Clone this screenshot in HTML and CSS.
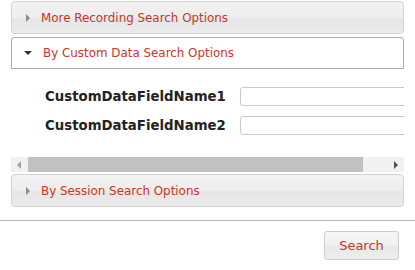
FILE: index.html
```html
<!DOCTYPE html>
<html>
<head>
<meta charset="utf-8">
<link rel="stylesheet" href="styles.css">
</head>
<body>
<div class="panel">
  <div class="acc-header collapsed">
    <span class="tri tri-right"></span>
    <span class="acc-title">More Recording Search Options</span>
  </div>
  <div class="acc-header active">
    <span class="tri tri-down"></span>
    <span class="acc-title">By Custom Data Search Options</span>
  </div>
  <div class="acc-content">
    <div class="scroll-view">
      <div class="fields">
        <div class="field-row">
          <label class="field-label">CustomDataFieldName1</label>
          <input class="field-input" type="text">
        </div>
        <div class="field-row">
          <label class="field-label">CustomDataFieldName2</label>
          <input class="field-input" type="text">
        </div>
      </div>
    </div>
    <div class="hscroll">
      <div class="sb-btn"><span class="sb-arrow sb-left"></span></div>
      <div class="sb-track"><div class="sb-thumb"></div></div>
      <div class="sb-btn"><span class="sb-arrow sb-right"></span></div>
    </div>
  </div>
  <div class="acc-header collapsed">
    <span class="tri tri-right"></span>
    <span class="acc-title">By Session Search Options</span>
  </div>
</div>
<div class="footer">
  <button class="search-btn" type="button">Search</button>
</div>
</body>
</html>
```

FILE: styles.css
```css
html, body {
  margin: 0;
  padding: 0;
  background: #ffffff;
}
body {
  font-family: "DejaVu Sans", Verdana, sans-serif;
  font-size: 12px;
  width: 415px;
  height: 270px;
  overflow: hidden;
}
.panel {
  padding: 1px 11px 0 11px;
  display: flex;
  flex-direction: column;
}
.acc-header {
  box-sizing: border-box;
  height: 33px;
  display: flex;
  align-items: center;
  padding-left: 12px;
  border: 1px solid #d3d3d3;
  border-radius: 4px;
  color: #c8352b;
}
.acc-header.collapsed {
  background: linear-gradient(to bottom, #f2f2f2 0%, #ededed 50%, #e6e6e6 51%, #ebebeb 100%);
}
.acc-header.active {
  margin-top: 3px;
  height: 32px;
  background: #ffffff;
  border: 1px solid #aaaaaa;
  border-radius: 3px 3px 0 0;
}
.acc-title {
  margin-left: 11px;
  font-size: 11.9px;
}
.tri {
  width: 0;
  height: 0;
  display: inline-block;
}
.tri-right {
  border-top: 4px solid transparent;
  border-bottom: 4px solid transparent;
  border-left: 4px solid #8a8a8a;
  margin-left: 2px;
}
.tri-down {
  border-left: 4px solid transparent;
  border-right: 4px solid transparent;
  border-top: 4px solid #333333;
}
.acc-content {
  display: flex;
  flex-direction: column;
  padding-bottom: 2px;
}
.scroll-view {
  overflow: hidden;
  height: 87px;
}
.fields {
  padding: 18px 0 0 34px;
  display: flex;
  flex-direction: column;
  gap: 10px;
  width: 600px;
}
.field-row {
  display: flex;
  align-items: center;
  height: 19px;
}
.field-label {
  width: 195px;
  font-weight: bold;
  font-size: 13.3px;
  color: #222222;
}
.field-input {
  box-sizing: border-box;
  width: 200px;
  height: 19px;
  margin: 0;
  border: 1px solid #c8c8c8;
  border-radius: 3px;
  background: #ffffff;
  padding: 0;
}
.hscroll {
  display: flex;
  height: 15px;
  margin-top: 1px;
  background: #f1f1f1;
}
.sb-btn {
  width: 16px;
  display: flex;
  align-items: center;
  justify-content: center;
}
.sb-track {
  flex: 1;
  display: flex;
  align-items: stretch;
  padding-left: 1px;
}
.sb-thumb {
  width: 335px;
  background: #c1c1c1;
}
.sb-arrow {
  width: 0;
  height: 0;
  border-top: 4px solid transparent;
  border-bottom: 4px solid transparent;
}
.sb-left {
  border-right: 4px solid #a3a3a3;
}
.sb-right {
  border-left: 4px solid #505050;
}
.footer {
  margin-top: 13px;
  border-top: 1px solid #b4b4b4;
  display: flex;
  justify-content: flex-end;
  padding: 10px 16px 0 0;
}
.search-btn {
  box-sizing: border-box;
  width: 75px;
  height: 29px;
  border: 1px solid #cccccc;
  border-radius: 3px;
  background: linear-gradient(to bottom, #f7f7f7 0%, #f0f0f0 50%, #e8e8e8 51%, #ededed 100%);
  color: #c8352b;
  font-family: "DejaVu Sans", Verdana, sans-serif;
  font-size: 13px;
  padding: 0;
}
```
